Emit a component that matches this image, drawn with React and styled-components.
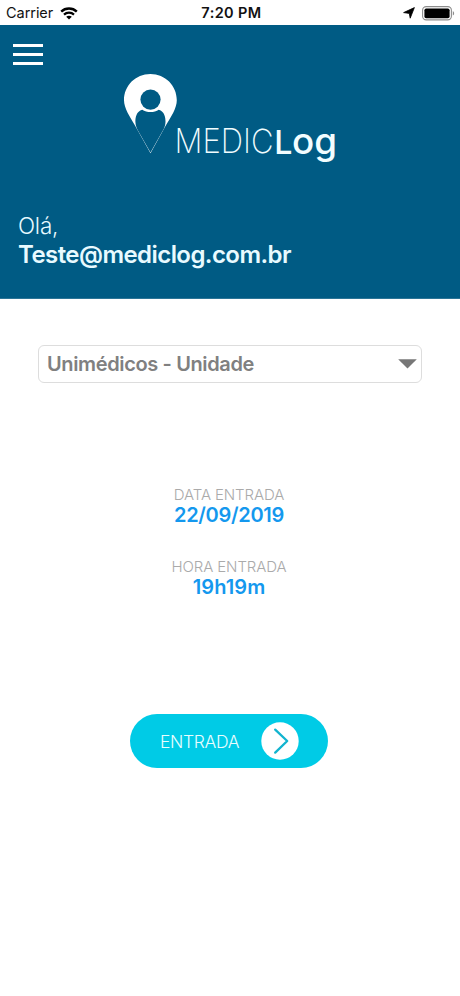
import React from "react";
import styled, { createGlobalStyle } from "styled-components";

const GlobalStyle = createGlobalStyle`
  * {
    box-sizing: border-box;
  }
  body {
    margin: 0;
    background-color: #ffffff;
    font-family: Inter, "Liberation Sans", sans-serif;
  }
`;

const WifiIcon = () => (
  <svg width="18" height="13" viewBox="0 0 18 13" fill="none" stroke="#000000">
    <path d="M1.2 4.6 C5.5 0.4 12.5 0.4 16.8 4.6" strokeWidth="2.4" />
    <path d="M4 7.6 C6.8 4.9 11.2 4.9 14 7.6" strokeWidth="2.2" />
    <path d="M9 12.6 L6.2 9.8 C7.8 8.3 10.2 8.3 11.8 9.8 Z" fill="#000000" stroke="none" />
  </svg>
);

const LocationIcon = () => (
  <svg width="12" height="12" viewBox="0 0 12 12">
    <path d="M11.4 0.6 L7.2 11.2 L6.3 6.4 L0.6 5.6 Z" fill="#000000" stroke="#000000" strokeWidth="0.8" strokeLinejoin="round" />
  </svg>
);

const BatteryIcon = () => (
  <svg width="33" height="15" viewBox="0 0 33 15">
    <rect x="0.6" y="0.6" width="28.8" height="13.3" rx="3.6" fill="none" stroke="#8c8c8c" strokeWidth="1.1" />
    <rect x="2.4" y="2.4" width="25.2" height="9.8" rx="1.8" fill="#000000" />
    <path d="M30.8 5 C32.6 5.8 32.6 8.8 30.8 9.6 Z" fill="#8c8c8c" />
  </svg>
);

const Logo = () => (
  <svg width="220" height="100" viewBox="120 70 220 100">
    <path
      d="M150.4 74 C135.6 74 124 85.6 124 100.2 C124 108 130 117 135 125.5 L150.5 153.3 L165.8 125.5 C171 117 176.8 108 176.8 100.2 C176.8 85.6 165.2 74 150.4 74 Z"
      fill="#ffffff"
    />
    <path
      d="M142.2 109.7 C136.5 111.5 135.3 117 135.4 122 C135.5 126 137 129 138.5 131.6 L150.5 152.6 L162.3 131.6 C164 129 165.4 126 165.5 122 C165.6 117 164.4 111.5 158.8 109.7 C154.3 112.9 146.8 112.9 142.2 109.7 Z"
      fill="#005b84"
    />
    <circle cx="150.5" cy="99.6" r="10.1" fill="#005b84" />
    <LogoText x="174.6" y="153.4" textLength="99" lengthAdjust="spacingAndGlyphs" $size={33.5} $weight={200}>
      MEDIC
    </LogoText>
    <LogoText x="274.2" y="153.6" textLength="18.2" lengthAdjust="spacingAndGlyphs" $size={33} $weight={500}>
      L
    </LogoText>
    <LogoText x="292" y="153.8" textLength="45" lengthAdjust="spacingAndGlyphs" $size={36} $weight={500}>
      og
    </LogoText>
  </svg>
);

const App = () => {
  return (
    <Screen>
      <GlobalStyle />
      <StatusBar>
        <StatusLeft>
          <Carrier>Carrier</Carrier>
          <WifiIcon />
        </StatusLeft>
        <Clock>7:20 PM</Clock>
        <StatusRight>
          <LocationIcon />
          <BatteryIcon />
        </StatusRight>
      </StatusBar>
      <Header>
        <MenuButton aria-label="Menu">
          <MenuLine />
          <MenuLine />
          <MenuLine />
        </MenuButton>
        <LogoRow>
          <Logo />
        </LogoRow>
        <Hello>Olá,</Hello>
        <UserName>Teste@mediclog.com.br</UserName>
      </Header>
      <Content>
        <UnitSelect>
          <UnitName>Unimédicos - Unidade</UnitName>
          <svg width="19" height="10" viewBox="0 0 19 10">
            <path d="M0.2 0.2 H18.8 L9.5 9.4 Z" fill="#777777" />
          </svg>
        </UnitSelect>
        <Entries>
          <Entry>
            <Label>DATA ENTRADA</Label>
            <Value $spacing="-0.3px">22/09/2019</Value>
          </Entry>
          <Entry>
            <Label>HORA ENTRADA</Label>
            <Value $spacing="0.1px">19h19m</Value>
          </Entry>
        </Entries>
        <EnterButton>
          <EnterText>ENTRADA</EnterText>
          <svg width="38" height="38" viewBox="0 0 38 38">
            <circle cx="19" cy="19" r="18.7" fill="#ffffff" />
            <path d="M14.2 7.6 L26.2 19 L14.2 30.6" fill="none" stroke="#12b4cf" strokeWidth="2.3" strokeLinecap="round" strokeLinejoin="round" />
          </svg>
        </EnterButton>
      </Content>
    </Screen>
  );
};

const Screen = styled.div`
  display: flex;
  flex-direction: column;
  width: 460px;
  height: 996px;
  background-color: #ffffff;
  overflow: hidden;
`;
const StatusBar = styled.div`
  display: grid;
  grid-template-columns: 1fr auto 1fr;
  align-items: center;
  height: 25px;
  padding: 1px 5px 0 8px;
  color: #111111;
`;
const StatusLeft = styled.div`
  display: flex;
  align-items: center;
  gap: 7px;
  margin-left: -2px;
`;
const Carrier = styled.span`
  font-size: 14.5px;
  line-height: 18px;
  letter-spacing: -0.05px;
`;
const Clock = styled.span`
  font-size: 14.5px;
  font-weight: 600;
  line-height: 18px;
  letter-spacing: 0.4px;
`;
const StatusRight = styled.div`
  display: flex;
  justify-content: flex-end;
  align-items: center;
  gap: 7px;
`;
const Header = styled.header`
  display: flex;
  flex-direction: column;
  height: 274px;
  padding-top: 19px;
  background-color: #005b84;
  border-bottom: 1px solid #2b7597;
`;
const MenuButton = styled.button`
  display: flex;
  flex-direction: column;
  justify-content: space-between;
  width: 30px;
  height: 21px;
  margin-left: 13px;
  padding: 0;
  border: none;
  background: none;
`;
const MenuLine = styled.span`
  height: 3px;
  background-color: #ffffff;
`;
const LogoRow = styled.div`
  display: flex;
  height: 100px;
  margin-top: 5px;
  padding-left: 120px;
`;
const LogoText = styled.text`
  font-size: ${(props) => props.$size}px;
  font-weight: ${(props) => props.$weight};
  fill: #f2fdff;
`;
const Hello = styled.div`
  margin: 42px 0 0 18px;
  font-size: 22.5px;
  font-weight: 300;
  line-height: 28px;
  letter-spacing: -0.2px;
  color: #e8faff;
`;
const UserName = styled.div`
  margin-left: 18px;
  font-size: 24px;
  font-weight: 600;
  line-height: 29px;
  letter-spacing: -0.56px;
  color: #e8faff;
`;
const Content = styled.main`
  display: flex;
  flex-direction: column;
  align-items: center;
`;
const UnitSelect = styled.div`
  display: flex;
  justify-content: space-between;
  align-items: center;
  width: 384px;
  height: 38px;
  margin-top: 46px;
  padding: 0 4px 1px 8px;
  border: 1px solid #dddddd;
  border-radius: 6px;
`;
const UnitName = styled.span`
  font-size: 20px;
  font-weight: 600;
  line-height: 24px;
  letter-spacing: -0.37px;
  color: #808080;
`;
const Entries = styled.div`
  display: flex;
  flex-direction: column;
  gap: 31px;
  width: 100%;
  margin-top: 102px;
  padding-right: 2px;
`;
const Entry = styled.div`
  display: flex;
  flex-direction: column;
  align-items: center;
`;
const Label = styled.span`
  font-size: 15px;
  font-weight: 300;
  line-height: 19px;
  letter-spacing: -0.1px;
  color: #aaaaaa;
`;
const Value = styled.span`
  font-size: 20px;
  font-weight: 600;
  line-height: 22px;
  letter-spacing: ${(props) => props.$spacing};
  color: #1498ee;
`;
const EnterButton = styled.button`
  display: flex;
  justify-content: space-between;
  align-items: center;
  width: 198px;
  height: 54px;
  margin: 116px 2px 0 0;
  padding: 0 29px 0 30px;
  border: none;
  border-radius: 27px;
  background-color: #00cbe6;
  font-family: inherit;
`;
const EnterText = styled.span`
  font-size: 17.5px;
  font-weight: 300;
  letter-spacing: -0.35px;
  color: #e8fdff;
`;

export default App;
